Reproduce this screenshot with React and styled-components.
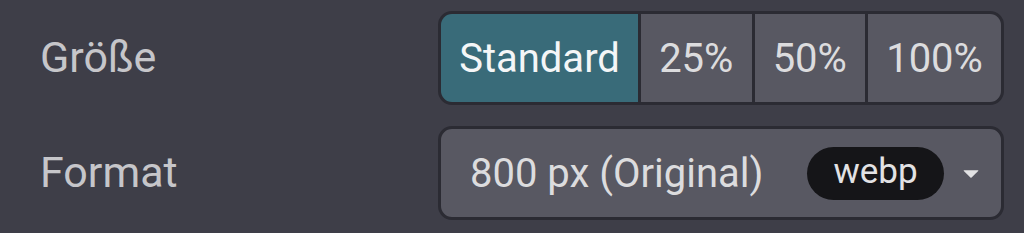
import React, { useState } from "react";
import styled, { createGlobalStyle } from "styled-components";

const Global = createGlobalStyle`
  html, body { margin: 0; padding: 0; background: #3e3e48; }
  body { font-family: Roboto, "Liberation Sans", sans-serif; }
  * { box-sizing: border-box; }
`;

const Panel = styled.div`
  display: grid;
  grid-template-columns: 1fr 566px;
  row-gap: 21px;
  align-items: center;
  padding: 11px 20px 13px 40px;
  width: 1024px;
  height: 233px;
`;

const Label = styled.div`
  font-size: 43px;
  color: #c6c6ca;
  line-height: 1;
  padding-bottom: 2px;
`;

const Segmented = styled.div`
  display: flex;
  height: 94px;
  gap: 3px;
  border: 3px solid #2b2b33;
  background: #2b2b33;
  border-radius: 14px;
  overflow: hidden;
`;

const Segment = styled.button`
  flex: 1 1 auto;
  border: none;
  margin: 0;
  padding: 0 18px;
  font-family: inherit;
  font-size: 40px;
  cursor: pointer;
  background: ${(p) => (p.$active ? "#396b79" : "#585862")};
  color: ${(p) => (p.$active ? "#f4f6f7" : "#dcdcde")};
`;

const Select = styled.div`
  display: flex;
  align-items: center;
  height: 94px;
  border: 3px solid #2b2b33;
  background: #585862;
  border-radius: 14px;
  padding: 0 22px 0 29px;
  color: #dcdcde;
  font-size: 40px;
`;

const Value = styled.span`
  flex: 1;
`;

const Pill = styled.span`
  display: inline-flex;
  align-items: center;
  justify-content: center;
  width: 137px;
  height: 53px;
  border-radius: 27px;
  background: #151518;
  color: #e2e2e4;
  font-size: 35px;
  padding-bottom: 3px;
  margin-right: 19px;
`;

const Caret = styled.svg`
  width: 16px;
  height: 9px;
  display: block;
`;

export default function App() {
  const [size, setSize] = useState("Standard");
  const options = ["Standard", "25%", "50%", "100%"];
  return (
    <>
      <Global />
      <Panel>
        <Label>Größe</Label>
        <Segmented>
          {options.map((o) => (
            <Segment key={o} $active={size === o} onClick={() => setSize(o)}>
              {o}
            </Segment>
          ))}
        </Segmented>
        <Label>Format</Label>
        <Select>
          <Value>800 px (Original)</Value>
          <Pill>webp</Pill>
          <Caret viewBox="0 0 16 9">
            <path d="M1 1.2 L15 1.2 Q15.6 1.4 15.2 2 L8.6 8.4 Q8 8.9 7.4 8.4 L0.8 2 Q0.4 1.4 1 1.2 Z" fill="#e2e2e4" />
          </Caret>
        </Select>
      </Panel>
    </>
  );
}
